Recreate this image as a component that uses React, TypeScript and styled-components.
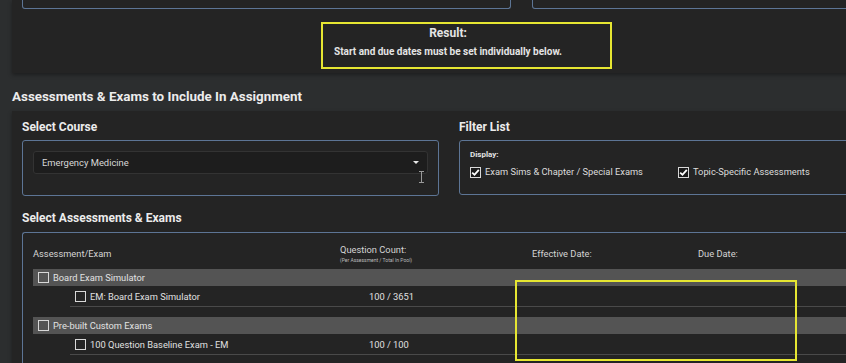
import React from "react";
import styled, { createGlobalStyle } from "styled-components";

const Global = createGlobalStyle`
  html, body { margin: 0; padding: 0; }
  body {
    width: 846px;
    height: 363px;
    overflow: hidden;
    background: #2c2e2f;
    font-family: Roboto, "Liberation Sans", Arial, sans-serif;
    color: #e4e4e4;
  }
  * { box-sizing: border-box; }
`;

const Page = styled.div`
  position: relative;
  width: 1060px;
  padding-left: 12px;
`;

const Card = styled.section`
  background: #242424;
  box-shadow: 0 2px 4px rgba(0, 0, 0, 0.35);
  padding: 0 10px;
`;

const TopCard = styled(Card)`
  padding-bottom: 4px;
`;

const StubRow = styled.div`
  display: grid;
  grid-template-columns: 489px 489px;
  column-gap: 21px;
`;

const InputStub = styled.div`
  height: 9px;
  border: 1px solid #5d7595;
  border-top: none;
  border-radius: 0 0 3px 3px;
`;

const ResultBox = styled.div`
  margin: 13px 0 0 299px;
  width: fit-content;
  border: 2px solid #e6e632;
  padding: 0 48px 9px 11px;
`;

const ResultTitle = styled.div`
  font-weight: 700;
  font-size: 12px;
  line-height: 14px;
  text-align: center;
  padding-top: 2px;
`;

const ResultText = styled.div`
  font-weight: 700;
  font-size: 10px;
  line-height: 12px;
  margin-top: 6px;
`;

const Heading = styled.h2`
  margin: 15px 0 5px;
  font-size: 13.4px;
  line-height: 18px;
  font-weight: 700;
  color: #ececec;
`;

const MainCard = styled(Card)`
  min-height: 260px;
`;

const TopGrid = styled.div`
  display: grid;
  grid-template-columns: 417px 540px;
  column-gap: 20px;
`;

const Label = styled.div<{ $top?: number; $bottom?: number }>`
  font-size: 12px;
  font-weight: 700;
  line-height: 14px;
  padding-top: ${(p) => p.$top ?? 9}px;
  margin-bottom: ${(p) => p.$bottom ?? 6}px;
  color: #ececec;
`;

const BlueBox = styled.div`
  border: 1px solid #5d7595;
  border-radius: 3px;
`;

const CourseBox = styled(BlueBox)`
  height: 56px;
  padding: 10px 10px 0;
`;

const Select = styled.div`
  height: 23px;
  background: #1d1d1d;
  border: 1px solid #333;
  border-radius: 3px;
  display: flex;
  align-items: center;
  justify-content: space-between;
  padding: 0 8px 0 8px;
  font-size: 9.4px;
  color: #d8d8d8;
`;

const Caret = styled.span`
  width: 0;
  height: 0;
  border-left: 3px solid transparent;
  border-right: 3px solid transparent;
  border-top: 3px solid #e8e8e8;
`;

const FilterBox = styled(BlueBox)`
  height: 55px;
  margin-top: 1px;
  padding: 9px 10px 0;
`;

const DisplayLabel = styled.div`
  font-size: 8px;
  font-weight: 700;
  line-height: 10px;
`;

const CheckRow = styled.div`
  display: flex;
  align-items: center;
  margin-top: 6px;
`;

const CheckItem = styled.label<{ $width?: number }>`
  display: flex;
  align-items: center;
  gap: 4px;
  font-size: 9.3px;
  line-height: 12px;
  color: #dcdcdc;
  width: ${(p) => (p.$width ? `${p.$width}px` : "auto")};
`;

const Box = styled.span<{ $checked?: boolean }>`
  width: 11px;
  height: 11px;
  flex: none;
  border: 1px solid #d8d8d8;
  display: inline-flex;
  align-items: center;
  justify-content: center;
  background: ${(p) => (p.$checked ? "#1a1a1a" : "transparent")};
`;

const TableBox = styled.div`
  border: 1px solid #5d7595;
  border-right: none;
  border-bottom: none;
  border-radius: 3px 0 0 0;
  padding: 0 0 20px 10px;
  height: 140px;
`;

const HeaderRow = styled.div`
  display: grid;
  grid-template-columns: 307px 192px 166px 1fr;
  height: 36px;
  padding-top: 5px;
  align-items: center;
  font-size: 9.3px;
  color: #d4d4d4;
`;

const HeadCell = styled.div`
  line-height: 12px;
`;

const SubNote = styled.div`
  font-size: 5px;
  line-height: 8px;
  color: #bbb;
`;

const GroupRow = styled.div<{ $gap?: number }>`
  height: 17px;
  background: #545454;
  display: flex;
  align-items: center;
  gap: 4px;
  padding-left: 5px;
  font-size: 9.3px;
  color: #e2e2e2;
  margin-top: ${(p) => p.$gap ?? 0}px;
`;

const ItemRow = styled.div`
  margin-left: 37px;
  height: 21px;
  border-bottom: 1px solid #4a4a4a;
  display: grid;
  grid-template-columns: 299px 1fr;
  align-items: center;
  font-size: 9.3px;
  color: #e0e0e0;
`;

const ItemName = styled.div`
  display: flex;
  align-items: center;
  gap: 4px;
  padding-left: 5px;
`;

const Frame = styled.div`
  position: absolute;
  left: 515px;
  top: 280px;
  width: 282px;
  height: 81px;
  border: 2px solid #e6e632;
  pointer-events: none;
`;

const Cursor = styled.svg`
  position: absolute;
  left: 418px;
  top: 171px;
`;

const Check = () => (
  <svg width="9" height="9" viewBox="0 0 9 9">
    <path d="M1.2 4.6 L3.5 6.8 L7.8 1.8" fill="none" stroke="#fff" strokeWidth="1.8" />
  </svg>
);

export default function App() {
  return (
    <>
      <Global />
      <Page>
        <TopCard>
          <StubRow>
            <InputStub />
            <InputStub />
          </StubRow>
          <ResultBox>
            <ResultTitle>Result:</ResultTitle>
            <ResultText>Start and due dates must be set individually below.</ResultText>
          </ResultBox>
        </TopCard>
        <Heading>Assessments &amp; Exams to Include In Assignment</Heading>
        <MainCard>
          <TopGrid>
            <div>
              <Label>Select Course</Label>
              <CourseBox>
                <Select>
                  <span>Emergency Medicine</span>
                  <Caret />
                </Select>
              </CourseBox>
            </div>
            <div>
              <Label>Filter List</Label>
              <FilterBox>
                <DisplayLabel>Display:</DisplayLabel>
                <CheckRow>
                  <CheckItem $width={208}>
                    <Box $checked>
                      <Check />
                    </Box>
                    Exam Sims &amp; Chapter / Special Exams
                  </CheckItem>
                  <CheckItem>
                    <Box $checked>
                      <Check />
                    </Box>
                    Topic-Specific Assessments
                  </CheckItem>
                </CheckRow>
              </FilterBox>
            </div>
          </TopGrid>
          <Label $top={15} $bottom={7}>
            Select Assessments &amp; Exams
          </Label>
          <TableBox>
            <HeaderRow>
              <HeadCell>Assessment/Exam</HeadCell>
              <HeadCell>
                Question Count:
                <SubNote>(Per Assessment / Total In Pool)</SubNote>
              </HeadCell>
              <HeadCell>Effective Date:</HeadCell>
              <HeadCell>Due Date:</HeadCell>
            </HeaderRow>
            <GroupRow>
              <Box />
              Board Exam Simulator
            </GroupRow>
            <ItemRow>
              <ItemName>
                <Box />
                EM: Board Exam Simulator
              </ItemName>
              <span>100 / 3651</span>
            </ItemRow>
            <GroupRow $gap={10}>
              <Box />
              Pre-built Custom Exams
            </GroupRow>
            <ItemRow>
              <ItemName>
                <Box />
                100 Question Baseline Exam - EM
              </ItemName>
              <span>100 / 100</span>
            </ItemRow>
          </TableBox>
        </MainCard>
        <Frame />
        <Cursor width="7" height="12" viewBox="0 0 7 12">
          <path d="M1 0.5 H6 M3.5 0.5 V11.5 M1 11.5 H6" stroke="#9a9a9a" strokeWidth="1" fill="none" />
        </Cursor>
      </Page>
    </>
  );
}
